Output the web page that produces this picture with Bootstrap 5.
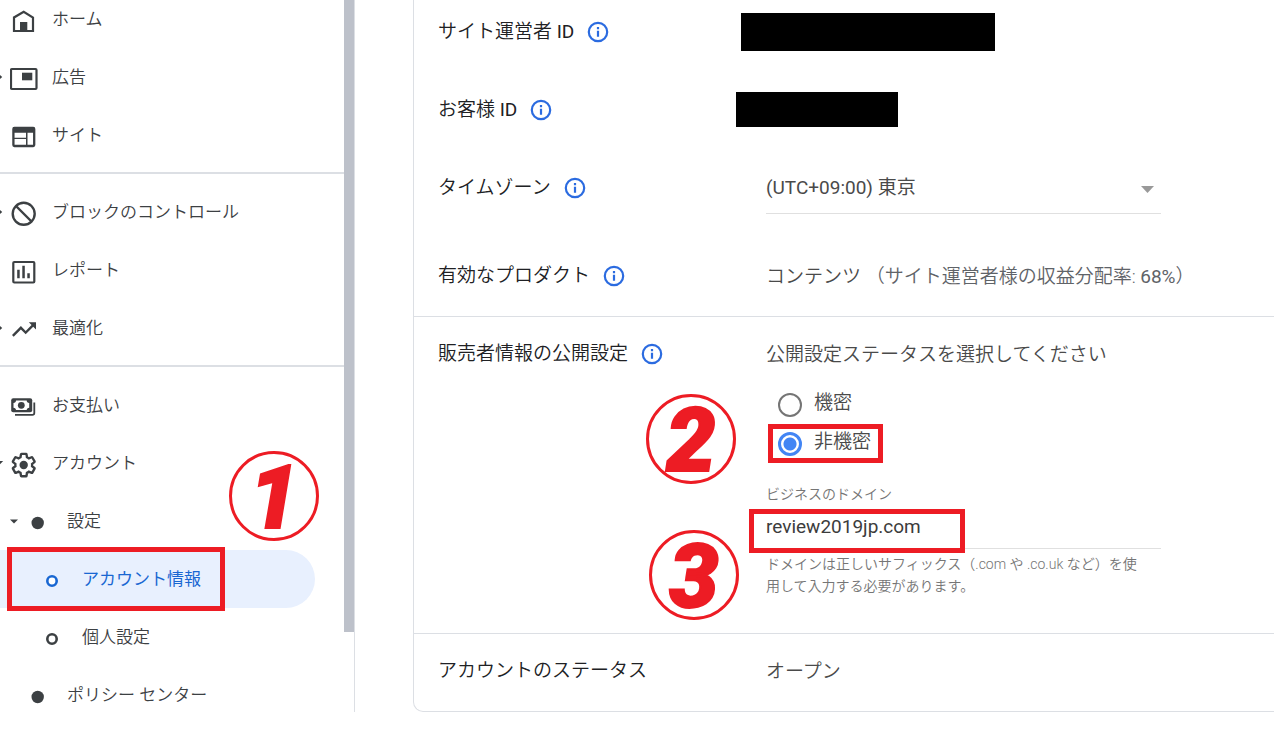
<!DOCTYPE html>
<html lang="ja">
<head>
<meta charset="utf-8">
<meta name="viewport" content="width=device-width, initial-scale=1">
<title>アカウント情報</title>
<link rel="stylesheet" href="https://cdn.jsdelivr.net/npm/bootstrap@5.3.0/dist/css/bootstrap.min.css">
<style>
:root { --ink: #3c4043; --line: #dcdfe4; --mark-red: #ed1c24; --link-blue: #1967d2; }
body { font-family: Roboto, "Noto Sans CJK JP", sans-serif; font-size: 19px; line-height: 24px; font-weight: 350; color: #202124; background: #fff; }

/* sidebar */
.side { width: 355px; padding-right: 10px; border-right: 1px solid var(--line); font-size: 17px; }
.side-thumb { position: absolute; top: 0; right: 0; bottom: 80px; width: 10px; background: #bdc1ca; }
.side hr { margin: 8px 0 9px; border-top: 2px solid var(--line); opacity: 1; }
.side-item { position: relative; display: flex; align-items: center; height: 58px; padding: 0 0 0 10px; color: var(--ink); text-decoration: none; }
.side-item.first { height: 48px; padding-bottom: 10px; }
.side-item.last { height: 46px; padding-top: 12px; }
.side-item > svg { flex: none; width: 28px; height: 28px; margin: 4px 14px 0 0; color: var(--ink); }
.side-item > .tip { position: absolute; left: 0; top: 25px; width: 4px; height: 8px; margin: 0; }
.side-item.lv2 > svg { width: 36px; margin-right: 21px; }
.side-item.lv3 { padding-left: 38px; }
.side-item.lv3 > svg { margin-right: 16px; }
.side-item.active { width: 315px; border-radius: 0 29px 29px 0; background: #e8f0fe; color: var(--link-blue); font-weight: 400; }
.side-item.active > svg { color: var(--link-blue); }

/* settings panel */
.panel { margin: 0 6px 0 58px; border: solid var(--line); border-width: 0 0 1px 1px; border-bottom-left-radius: 10px; }
.panel section + section { border-top: 1px solid var(--line); padding-top: 5px; }
.line { display: flex; padding: 20px 0 0 24px; min-height: 78px; }
.line.tall { min-height: 88px; }
.line.low { min-height: 72px; }
.term { flex: none; width: 328px; display: flex; gap: 13px; align-items: center; height: 24px; }
.latin { font-weight: 400; }
.val { position: relative; flex: 1; padding-top: 1px; color: #4a4a4a; }
.val-title { margin-bottom: 18px; }
.share { color: #5f6368; }
.field-col { width: 395px; }
.info-btn { display: flex; padding: 0; border: 0; background: none; color: #2b6be0; }
.info-btn svg { width: 22px; height: 22px; }
.redact { position: absolute; background: #000; }
.redact.a { left: -25px; top: -7px; width: 254px; height: 38px; }
.redact.b { left: -30px; top: -6px; width: 162px; height: 35px; }
.zone { appearance: none; width: 100%; height: 38px; padding: 0 0 14px; border: 0; border-bottom: 1px solid #e0e0e0; border-radius: 0; background: none; color: #4a4a4a; font-weight: 400; line-height: 23px; }
.zone-arrow { position: absolute; right: 7px; top: 10px; width: 13px; height: 7px; color: #999; pointer-events: none; }
.choice { position: relative; display: flex; align-items: center; gap: 12px; height: 39px; width: 115px; margin-left: 2px; padding-left: 10px; }
.choice input { appearance: none; flex: none; width: 24px; height: 24px; margin: 0; border: 2px solid #757575; border-radius: 50%; }
.choice input:checked { border: 3px solid #4285f4; background: radial-gradient(circle, #4285f4 6px, #fff 7px); }
.choice label { padding-bottom: 4px; }
.hint { font-size: 14px; line-height: 22px; color: #757575; }
.domain { display: block; width: 100%; height: 44px; padding: 0; border: 0; border-bottom: 1px solid #e0e0e0; background: none; color: #3c3c3c; font-weight: 400; outline: 0; }

/* red annotations */
.frame { position: absolute; border: 5px solid var(--mark-red); pointer-events: none; z-index: 2; }
.frame-nav { left: 7px; top: -3px; bottom: -3px; width: 218px; }
.frame-radio { inset: 0; }
.frame-domain { left: -17px; right: 196px; top: 4px; bottom: -4px; }
.step { position: absolute; z-index: 3; display: flex; align-items: center; justify-content: center; width: 90px; height: 90px; padding-top: 4px; border: 3px solid var(--mark-red); border-radius: 50%; color: var(--mark-red); font: italic 900 88px/80px Roboto, sans-serif; -webkit-text-stroke: 2px var(--mark-red); }
.step-1 { left: 229px; top: -41px; }
.step-2 { left: 232px; top: 77px; }
.step-3 { left: 235px; top: 213px; }
</style>
</head>
<body>
<svg class="d-none">
  <symbol id="i-info" viewBox="0 0 22 22"><circle cx="11" cy="11" r="9.2" fill="none" stroke="currentColor" stroke-width="2.200"/><path fill="currentColor" d="M9.900 9.800h2.200v6H9.900zM9.900 6h2.200v2.200H9.900z"/></symbol>
  <symbol id="i-right" viewBox="0 0 4 8"><path fill="currentColor" d="M0 2 2.200 4 0 6z"/></symbol>
</svg>
<div class="d-flex align-items-stretch">
  <nav class="side position-relative flex-shrink-0">
    <a href="#" class="side-item first"><svg viewBox="0 0 28 28"><path fill="none" stroke="currentColor" stroke-width="2.200" d="M4 24V10.500L13.700 4.800 23 10.500V24z"/><path fill="currentColor" d="M10 15h7.300v10H10z"/></svg>ホーム</a>
    <a href="#" class="side-item"><svg class="tip"><use href="#i-right"/></svg><svg viewBox="0 0 28 28"><rect x="1" y="4" width="25.500" height="20" rx="1" fill="none" stroke="currentColor" stroke-width="2.200"/><path fill="currentColor" d="M12 7.700h10.300v7.600H12z"/></svg>広告</a>
    <a href="#" class="side-item"><svg viewBox="0 0 28 28"><rect x="3.400" y="5" width="20.800" height="18" rx="1" fill="none" stroke="currentColor" stroke-width="2.300"/><path fill="currentColor" d="M3 4h21v5.700H3zM3 14.700h13v1.300H3zM16 9h1.500v14H16z"/></svg>サイト</a>
    <hr>
    <a href="#" class="side-item"><svg class="tip"><use href="#i-right"/></svg><svg viewBox="0 0 28 28"><g fill="none" stroke="currentColor" stroke-width="2.400"><circle cx="13.700" cy="13.800" r="11"/><path d="m6 6 15.500 15.500"/></g></svg>ブロックのコントロール</a>
    <a href="#" class="side-item"><svg viewBox="0 0 28 28"><rect x="3.300" y="4" width="21" height="20.500" rx="1" fill="none" stroke="currentColor" stroke-width="2.200"/><path fill="currentColor" d="M7.200 11.700h2.500v8.600H7.200zM12.300 7.700h2.500v12.600h-2.500zM17.300 15.300h2.500v5h-2.500z"/></svg>レポート</a>
    <a href="#" class="side-item"><svg class="tip"><use href="#i-right"/></svg><svg viewBox="0 0 28 28"><path transform="translate(-.4 -.9) scale(1.2)" fill="currentColor" d="m16 6 2.290 2.290-4.880 4.880-4-4L2 16.590 3.410 18l6-6 4 4 6.300-6.290L22 12V6z"/></svg>最適化</a>
    <hr>
    <a href="#" class="side-item"><svg viewBox="0 0 28 28"><rect x="1.200" y="5.300" width="21" height="14" rx="2" fill="currentColor"/><path fill="#fff" d="M6 7.500h10.700c0 1.400 1 2.400 2.500 2.400v4.800c-1.500 0-2.500 1-2.500 2.400H6c0-1.400-1-2.400-2.500-2.400V9.900C5 9.900 6 8.900 6 7.500z"/><circle cx="11.300" cy="12.300" r="3.400" fill="currentColor"/><path fill="none" stroke="currentColor" stroke-width="1.800" d="M24.300 9.500V20q0 1.900-1.900 1.900H5"/></svg>お支払い</a>
    <a href="#" class="side-item"><svg class="tip" viewBox="0 0 4 8"><path fill="currentColor" d="M0 2h3.200L0 5.200z"/></svg><svg viewBox="0 0 28 28"><path transform="translate(.3 .6) scale(1.120)" fill="none" stroke="currentColor" stroke-width="2.100" d="M19.430 12.980c.04-.32.07-.64.07-.98 0-.34-.03-.66-.07-.98l2.110-1.650c.19-.15.24-.42.12-.64l-2-3.460c-.09-.16-.26-.25-.44-.25-.06 0-.12.01-.17.03l-2.490 1c-.52-.4-1.080-.73-1.690-.98l-.38-2.650C14.460 2.180 14.250 2 14 2h-4c-.25 0-.46.18-.49.42l-.38 2.650c-.61.25-1.170.59-1.690.98l-2.490-1c-.06-.02-.12-.03-.18-.03-.17 0-.34.09-.43.25l-2 3.460c-.13.22-.07.49.12.64l2.110 1.650c-.04.32-.07.65-.07.98 0 .33.03.66.07.98l-2.110 1.650c-.19.15-.24.42-.12.64l2 3.460c.09.16.26.25.44.25.06 0 .12-.01.17-.03l2.490-1c.52.4 1.080.73 1.690.98l.38 2.650c.03.24.24.42.49.42h4c.25 0 .46-.18.49-.42l.38-2.650c.61-.25 1.170-.59 1.690-.98l2.490 1c.06.02.12.03.18.03.17 0 .34-.09.43-.25l2-3.460c.12-.22.07-.49-.12-.64z"/><circle cx="13.700" cy="14" r="4.200" fill="currentColor"/></svg>アカウント</a>
    <div class="position-relative">
      <a href="#" class="side-item lv2"><svg viewBox="0 0 36 28"><path fill="currentColor" d="M0 10.500h8l-4 4z"/><circle cx="27.700" cy="14" r="6.200" fill="currentColor"/></svg>設定</a>
      <span class="step step-1">1</span>
    </div>
    <a href="#" class="side-item lv3 active" aria-current="page"><svg viewBox="0 0 28 28"><circle cx="14" cy="14" r="4.700" fill="#fff" stroke="currentColor" stroke-width="2.600"/></svg>アカウント情報<span class="frame frame-nav"></span></a>
    <a href="#" class="side-item lv3"><svg viewBox="0 0 28 28"><circle cx="14" cy="14" r="4.700" fill="none" stroke="currentColor" stroke-width="2.600"/></svg>個人設定</a>
    <a href="#" class="side-item lv2 last"><svg viewBox="0 0 36 28"><circle cx="27.700" cy="14" r="6.200" fill="currentColor"/></svg>ポリシー センター</a>
    <div class="side-thumb"></div>
  </nav>

  <main class="panel flex-grow-1 align-self-start">
    <section>
      <div class="line">
        <div class="term"><span>サイト運営者 <span class="latin">ID</span></span> <button type="button" class="info-btn" aria-label="詳細"><svg><use href="#i-info"/></svg></button></div>
        <div class="val"><span class="redact a"></span></div>
      </div>
      <div class="line">
        <div class="term"><span>お客様 <span class="latin">ID</span></span> <button type="button" class="info-btn" aria-label="詳細"><svg><use href="#i-info"/></svg></button></div>
        <div class="val"><span class="redact b"></span></div>
      </div>
      <div class="line tall">
        <div class="term"><label for="zone">タイムゾーン</label> <button type="button" class="info-btn" aria-label="詳細"><svg><use href="#i-info"/></svg></button></div>
        <div class="val pt-0"><div class="field-col position-relative">
          <select class="zone" id="zone"><option>(UTC+09:00) 東京</option></select>
          <svg class="zone-arrow" viewBox="0 0 13 7"><path fill="currentColor" d="M0 0h13L6.500 7z"/></svg>
        </div></div>
      </div>
      <div class="line low">
        <div class="term">有効なプロダクト <button type="button" class="info-btn" aria-label="詳細"><svg><use href="#i-info"/></svg></button></div>
        <div class="val">コンテンツ <span class="share">（サイト運営者様の収益分配率: <span class="latin">68%</span>）</span></div>
      </div>
    </section>

    <section class="position-relative">
      <div class="line pb-4">
        <div class="term">販売者情報の公開設定 <button type="button" class="info-btn" aria-label="詳細"><svg><use href="#i-info"/></svg></button></div>
        <div class="val mb-2 pb-1">
          <div class="val-title" id="status-label">公開設定ステータスを選択してください</div>
          <div role="radiogroup" aria-labelledby="status-label">
            <div class="choice"><input type="radio" name="status" id="secret"><label for="secret">機密</label></div>
            <div class="choice"><input type="radio" name="status" id="open" checked><label for="open">非機密</label><span class="frame frame-radio"></span></div>
          </div>
          <div class="field-col mt-3 pt-1">
            <label class="hint d-block" for="domain">ビジネスのドメイン</label>
            <div class="position-relative">
              <input type="text" class="domain" id="domain" value="review2019jp.com">
              <span class="frame frame-domain"></span>
            </div>
            <div class="hint mt-1">ドメインは正しいサフィックス（.com や .co.uk など）を使<br>用して入力する必要があります。</div>
          </div>
        </div>
      </div>
      <span class="step step-2">2</span>
      <span class="step step-3">3</span>
    </section>

    <section>
      <div class="line low">
        <div class="term">アカウントのステータス</div>
        <div class="val">オープン</div>
      </div>
    </section>
  </main>
</div>
<script src="https://cdn.jsdelivr.net/npm/bootstrap@5.3.0/dist/js/bootstrap.bundle.min.js"></script>
</body>
</html>
